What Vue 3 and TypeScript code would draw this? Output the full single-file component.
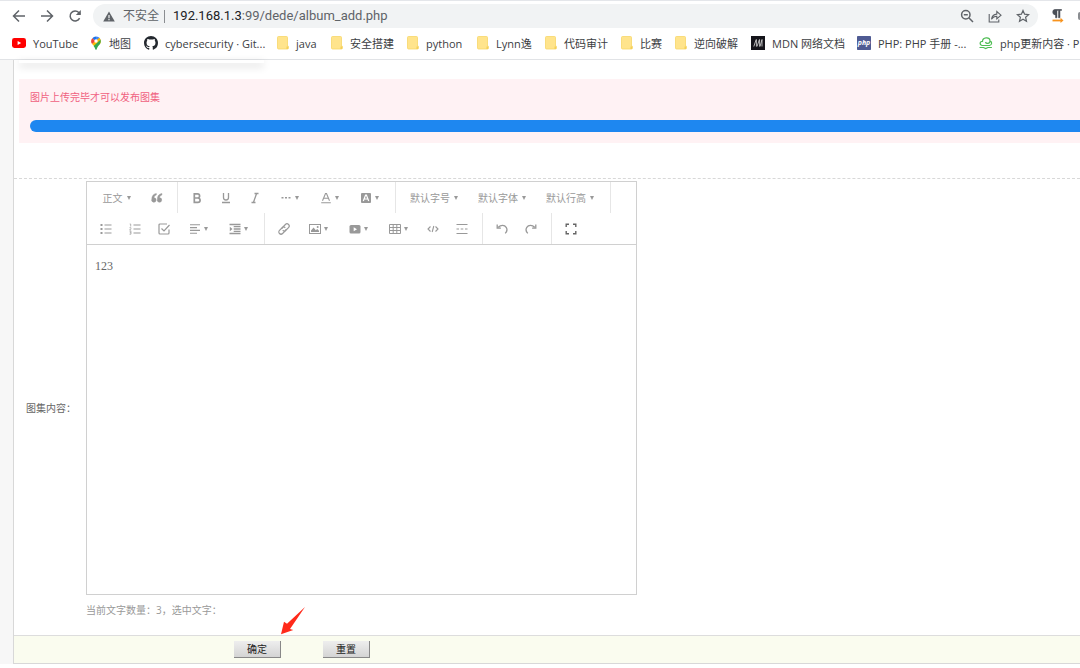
<script setup lang="ts">
import { computed, ref } from 'vue'

interface Bookmark {
  label: string
  icon: string
  width: number
}

interface Tool {
  name: string
  icon?: string
  text?: string
  menu?: boolean
}

const bookmarkIcons: Record<string, string> = {
  youtube:
    '<rect x="0" y="2" width="14" height="10" rx="2.4" fill="#f00"/><path d="M5.6 4.9v4.2L9.2 7z" fill="#fff"/>',
  map:
    '<path d="M6 .5A4.8 4.8 0 0 0 2.300 2.200L6 5.300z" fill="#1a73e8"/><path d="M2.300 2.200A4.800 4.800 0 0 0 2.100 8L6 5.300z" fill="#ea4335"/><path d="M6 .500A4.800 4.800 0 0 1 10.500 3.700L6 5.300z" fill="#4285f4"/><path d="M2.100 8L9.300 1.800C11.300 3.600 11.300 6.300 9.900 8.300L4.300 10.300z" fill="#fbbc04"/><path d="M10.500 3.700C11.300 6.300 9.800 8 8.700 9.400C7.500 10.900 7 12 6.700 13.200q-.7 1-1.400 0C4.900 12 4.500 11 3.600 9.900z" fill="#34a853"/><circle cx="6" cy="5" r="1.700" fill="#fff"/>',
  github:
    '<path transform="scale(.875)" fill="#24292f" d="M8 0C3.580 0 0 3.580 0 8c0 3.540 2.290 6.530 5.470 7.590.4.070.550-.170.550-.380 0-.190-.010-.820-.010-1.490-2.010.370-2.530-.490-2.690-.940-.090-.230-.480-.940-.820-1.130-.280-.150-.680-.520-.010-.530.630-.010 1.080.580 1.230.820.720 1.210 1.870.870 2.330.660.070-.520.280-.870.510-1.070-1.780-.2-3.640-.890-3.640-3.950 0-.870.310-1.590.820-2.150-.080-.2-.360-1.020.080-2.120 0 0 .670-.210 2.200.820.640-.180 1.320-.270 2-.270s1.360.090 2 .270c1.530-1.040 2.200-.820 2.200-.820.440 1.100.160 1.920.080 2.120.510.560.820 1.270.820 2.150 0 3.070-1.870 3.750-3.650 3.950.290.250.540.730.540 1.480 0 1.070-.010 1.930-.010 2.200 0 .210.150.460.550.380A8.010 8.010 0 0 0 16 8c0-4.420-3.580-8-8-8z"/>',
  folder:
    '<path d="M.5 1.500q0-1 1-1h8q1 0 1 1v8.700h.8v2.300q0 .5-.8.500h-9q-1 0-1-1z" fill="#ffe48c" stroke="#f8d768" stroke-width=".8"/><path d="M9.500 13v-2.600h1.800V12q0 1-1 1z" fill="#f5cf57"/>',
  mdn:
    '<rect width="14" height="14" fill="#15141a"/><path d="M2.800 10.500L5.200 3.500M5.400 3.500v7M6 10.500L8.400 3.500M8.600 3.500v7M9 10.500L11 3.500v7" stroke="#ddd" stroke-width=".8" fill="none"/>',
  php:
    '<rect width="14" height="14" rx=".8" fill="#4f5b93"/><text x="7" y="9" text-anchor="middle" font-family="Open Sans, sans-serif" font-size="7" font-style="italic" font-weight="700" fill="#fff">php</text>',
  cloud:
    '<path d="M3 9.500C0 8.500 1 5 3.500 5.500C3.500 1 10.500.500 11 4.500C11.500 8 7 8 6.500 6M11 5C13.500 5.500 13 9 10.500 9.500H3M.5 11.500h4l2.200 1 2.200-1h4" stroke="#4fbd54" stroke-width="1.200" fill="none"/>',
}

const bookmarks: Bookmark[] = [
  { label: 'YouTube', icon: 'youtube', width: 42 },
  { label: '地图', icon: 'map', width: 20 },
  { label: 'cybersecurity · Git...', icon: 'github', width: 97 },
  { label: 'java', icon: 'folder', width: 20 },
  { label: '安全搭建', icon: 'folder', width: 42 },
  { label: 'python', icon: 'folder', width: 36 },
  { label: 'Lynn逸', icon: 'folder', width: 34 },
  { label: '代码审计', icon: 'folder', width: 42 },
  { label: '比赛', icon: 'folder', width: 20 },
  { label: '逆向破解', icon: 'folder', width: 42 },
  { label: 'MDN 网络文档', icon: 'mdn', width: 70 },
  { label: 'PHP: PHP 手册 -...', icon: 'php', width: 86 },
  { label: 'php更新内容 · PH', icon: 'cloud', width: 90 },
]

const toolIcons: Record<string, string> = {
  quote:
    '<path d="M5.300 1.500C2.300 2 .8 4 .8 7.300A2.200 2.200 0 1 0 3 5.800C3 4.300 3.800 3.300 5.300 2.900zM10.900 1.500C7.900 2 6.400 4 6.400 7.300A2.200 2.200 0 1 0 8.600 5.800C8.600 4.300 9.400 3.300 10.900 2.900z" fill="currentColor" stroke="currentColor" stroke-width=".5"/>',
  bold:
    '<path d="M3.300 1.800h3.200a2 2 0 0 1 0 4.200H3.300zM3.300 6h3.600a2.200 2.200 0 0 1 0 4.400H3.300z" stroke="currentColor" stroke-width="1.700" fill="none"/>',
  underline:
    '<path d="M3.500 1v4.500a2.500 2.500 0 0 0 5 0V1M2 10.500h8" stroke="currentColor" stroke-width="1.300" fill="none"/>',
  italic: '<path d="M5.500 1.500h4M2.500 10.500h4M7.600 1.500L4.400 10.500" stroke="currentColor" stroke-width="1.300" fill="none"/>',
  more: '<path d="M1.500 5h2v1.500h-2zM5 5h2v1.500H5zM8.500 5h2v1.500h-2z" fill="currentColor"/>',
  color: '<path d="M2.500 8.800L5.500 1.500h1L9.500 8.800M3.700 6.300h4.600M1.200 10.800h9.600" stroke="currentColor" stroke-width="1.100" fill="none"/>',
  background:
    '<rect x="1" y="1" width="10" height="10" rx="1" fill="currentColor"/><path d="M3.300 9L5.600 3h.8L8.700 9M4.300 7h3.400" stroke="#fff" stroke-width="1.200" fill="none"/>',
  bullets:
    '<path d="M.5 1h2v2h-2zM.5 5h2v2h-2zM.5 9h2v2h-2z" fill="currentColor"/><path d="M4.500 2h7M4.500 6h7M4.500 10h7" stroke="currentColor" stroke-width="1.200"/>',
  numbers:
    '<path d="M4.500 2h7M4.500 6h7M4.500 10h7" stroke="currentColor" stroke-width="1.200"/><path d="M.7 1h1v2.500M.5 4.700h1.400v1L.6 7h1.600M.5 8.200h1.500v3H.5M.8 9.700h1.200" stroke="currentColor" stroke-width=".7" fill="none"/>',
  todo:
    '<path d="M9 1H2Q1 1 1 2v8q0 1 1 1h8q1 0 1-1V6.500M3.500 5.500L6 8l5.500-6" stroke="currentColor" stroke-width="1.200" fill="none"/>',
  align: '<path d="M1 1.800h10M1 4.600h7M1 7.400h10M1 10.200h7" stroke="currentColor" stroke-width="1.100"/>',
  indent:
    '<path d="M.5 1.500h11M4.700 3.700h6.800M4.700 6h6.800M4.700 8.300h6.800M.5 10.500h11" stroke="currentColor" stroke-width="1.300"/><path d="M.8 3.800v4.400L3.500 6z" fill="currentColor"/>',
  link:
    '<g transform="rotate(-45 6 6)" stroke="currentColor" stroke-width="1.200" fill="none"><path d="M7.300 7.500A2 2 0 0 1 5.600 8.200H1.800a2.200 2.200 0 0 1 0-4.400h3.800A2.200 2.200 0 0 1 7.800 6"/><path d="M4.700 4.500A2 2 0 0 1 6.400 3.800h3.800a2.200 2.200 0 0 1 0 4.400H6.400A2.200 2.200 0 0 1 4.200 6"/></g>',
  image:
    '<rect x=".5" y="1.500" width="11" height="9" stroke="currentColor" fill="none"/><path d="M2 9V7.500L4.600 4.500l2.200 2.700L8.200 6 10 7.700V9z" fill="currentColor"/><circle cx="8.700" cy="4" r="1" fill="currentColor"/>',
  video:
    '<rect x=".5" y="2" width="11" height="8.500" rx="1.500" fill="currentColor"/><path d="M4.700 4.300v4L8 6.300z" fill="#fff"/>',
  table:
    '<path d="M.5 1.500h11v9H.5zM.5 4.500h11M.5 7.500h11M4.200 1.500v9M7.800 1.500v9" stroke="currentColor" fill="none"/>',
  code: '<path d="M3.500 3.500L1 6l2.500 2.500M8.500 3.500L11 6 8.500 8.500M6.800 3L5.200 9" stroke="currentColor" stroke-width="1.100" fill="none"/>',
  divider:
    '<path d="M.5 1.500h11M.5 10.500h11M.5 6H3M4.700 6h2.600M9 6h2.500" stroke="currentColor" stroke-width="1.200"/>',
  undo: '<path d="M2.300 4.300C5 1.700 8.600 2 10.200 4.400c1.200 2 .8 4.300-1 6M1.200 1.500v3.600h3.700" stroke="currentColor" stroke-width="1.300" fill="none"/>',
  redo: '<path d="M9.700 4.300C7 1.700 3.400 2 1.800 4.400c-1.200 2-.8 4.300 1 6M10.800 1.500v3.600H7.100" stroke="currentColor" stroke-width="1.300" fill="none"/>',
  fullscreen:
    '<path d="M1.200 4V1.200H4M8 1.200h2.800V4M10.800 8v2.800H8M4 10.800H1.200V8" stroke="#666" stroke-width="1.400" fill="none"/>',
}

const toolbarRows: Tool[][][] = [
  [
    [{ name: '标题', text: '正文', menu: true }, { name: '引用', icon: 'quote' }],
    [
      { name: '粗体', icon: 'bold' },
      { name: '下划线', icon: 'underline' },
      { name: '斜体', icon: 'italic' },
      { name: '更多', icon: 'more', menu: true },
      { name: '文字颜色', icon: 'color', menu: true },
      { name: '背景色', icon: 'background', menu: true },
    ],
    [
      { name: '字号', text: '默认字号', menu: true },
      { name: '字体', text: '默认字体', menu: true },
      { name: '行高', text: '默认行高', menu: true },
    ],
  ],
  [
    [
      { name: '无序列表', icon: 'bullets' },
      { name: '有序列表', icon: 'numbers' },
      { name: '待办', icon: 'todo' },
      { name: '对齐', icon: 'align', menu: true },
      { name: '缩进', icon: 'indent', menu: true },
    ],
    [
      { name: '链接', icon: 'link' },
      { name: '图片', icon: 'image', menu: true },
      { name: '视频', icon: 'video', menu: true },
      { name: '表格', icon: 'table', menu: true },
      { name: '代码块', icon: 'code' },
      { name: '分割线', icon: 'divider' },
    ],
    [{ name: '撤销', icon: 'undo' }, { name: '重做', icon: 'redo' }],
    [{ name: '全屏', icon: 'fullscreen' }],
  ],
]

const address = ref('192.168.1.3:99/dede/album_add.php')
const host = computed(() => address.value.split(':')[0])
const path = computed(() => address.value.slice(host.value.length))
const content = ref('123')
const count = computed(() => content.value.length)
</script>

<template>
  <div class="window">
    <header class="browser">
      <div class="navigation">
        <button class="nav-button" aria-label="后退">
          <svg viewBox="0 0 14 14"><path d="M13 7H2M7 1.500L1.500 7 7 12.500" /></svg>
        </button>
        <button class="nav-button" aria-label="前进">
          <svg viewBox="0 0 14 14"><path d="M1 7h11M7 1.500L12.500 7 7 12.500" /></svg>
        </button>
        <button class="nav-button" aria-label="刷新">
          <svg viewBox="0 0 14 14">
            <path d="M11.600 9.200A5 5 0 1 1 10.800 3.500L12 4.800" />
            <path class="solid" d="M12.800 1v5H7.800z" />
          </svg>
        </button>
        <div class="address">
          <svg class="warning" viewBox="0 0 12 11">
            <path d="M6 .5L11.800 10.500H.2z" fill="#5f6368" />
            <path d="M6 4v3.200M6 8v1.300" stroke="#f1f3f4" stroke-width="1.200" />
          </svg>
          <span class="insecure">不安全</span>
          <span class="bar"></span>
          <a class="url" href="#"><b>{{ host }}</b>{{ path }}</a>
          <button class="address-button" aria-label="缩放">
            <svg viewBox="0 0 14 14"><circle cx="5.800" cy="5.800" r="4.200" /><path d="M9 9l4 4M3.800 5.800h4" /></svg>
          </button>
          <button class="address-button" aria-label="分享">
            <svg viewBox="0 0 14 14">
              <path class="thin" d="M1.200 5v8h9.600v-2.500M3.500 10.300C4 7 6 5.300 8.800 5.100V2.500L13 6.200 8.800 9.800V7.300C6.500 7.300 4.800 8.200 3.500 10.300z" />
            </svg>
          </button>
          <button class="address-button" aria-label="收藏">
            <svg viewBox="0 0 14 14">
              <path class="star" d="M7 1.500l1.600 3.700 4 .4-3 2.700.9 4L7 10.200l-3.500 2.100.9-4-3-2.700 4-.4z" />
            </svg>
          </button>
        </div>
        <button class="extension" aria-label="段落扩展">
          <svg viewBox="0 0 14 14">
            <path d="M4.500 8.800H6V1.500h1.500V8.800H9V1.500h1.500V.3H4.500a2.700 2.700 0 0 0 0 5.600z" fill="#4a4f57" stroke="#4a4f57" stroke-width=".5" />
            <path d="M1.500 11.500h8.500" stroke="#f7931e" stroke-width="1.800" />
            <path d="M9.500 8.800v5.200l3-2.600z" fill="#f7931e" />
          </svg>
        </button>
        <button class="profile" aria-label="更多扩展"></button>
      </div>
      <nav class="bookmarks">
        <a v-for="mark in bookmarks" :key="mark.label" class="bookmark" href="#">
          <svg
            :class="['bookmark-icon', mark.icon]"
            :viewBox="mark.icon === 'folder' || mark.icon === 'map' ? '0 0 12 14' : '0 0 14 14'"
            v-html="bookmarkIcons[mark.icon]"
          ></svg>
          <span class="bookmark-label" :style="{ width: mark.width + 'px' }">{{ mark.label }}</span>
        </a>
      </nav>
    </header>

    <div class="page">
      <main class="content">
        <div class="card"></div>
        <section class="notice">
          <p class="notice-text">图片上传完毕才可以发布图集</p>
          <div class="progress" role="progressbar" aria-label="上传进度" aria-valuenow="100"></div>
        </section>

        <form class="form" @submit.prevent>
          <div class="field">
            <label class="field-label" for="body">图集内容：</label>
            <div class="field-body">
              <div class="editor">
                <div class="toolbar" role="toolbar">
                  <div v-for="(row, r) in toolbarRows" :key="r" class="toolbar-row">
                    <div v-for="(group, g) in row" :key="g" class="group">
                      <button
                        v-for="tool in group"
                        :key="tool.name"
                        type="button"
                        :aria-label="tool.name"
                        :class="['tool', { menu: tool.menu, wide: tool.text, short: tool.text === '正文' }]"
                      >
                        <span v-if="tool.text">{{ tool.text }}</span>
                        <svg v-else class="tool-icon" viewBox="0 0 12 12" v-html="toolIcons[tool.icon!]"></svg>
                        <i v-if="tool.menu" class="caret"></i>
                      </button>
                    </div>
                  </div>
                </div>
                <textarea id="body" v-model="content" class="body" spellcheck="false"></textarea>
              </div>
              <p class="counter">当前文字数量：{{ count }}，选中文字：</p>
            </div>
          </div>
          <div class="actions">
            <button type="submit" class="action">确定</button>
            <button type="reset" class="action">重置</button>
            <svg class="pointer" viewBox="0 0 24 28">
              <path d="M0 27.300L3 14.700 6 16.700 24 0 9 22 12.300 23z" fill="#ff2a1a" />
            </svg>
          </div>
        </form>
      </main>
    </div>
  </div>
</template>

<style>
body {
  margin: 0;
  background: #fff;
}
</style>

<style scoped>
.window {
  overflow: hidden;
  font-family: "Open Sans", "Noto Sans CJK SC", sans-serif;
}

button {
  padding: 0;
  border: 0;
  background: none;
  font-family: inherit;
}

a {
  color: inherit;
  text-decoration: none;
}

p {
  margin: 0;
}

.browser {
  border-top: 1px solid #e4e6ea;
  border-bottom: 1px solid #e1e3e6;
  background: #fff;
}

.navigation {
  display: flex;
  align-items: center;
  height: 24px;
  padding: 3px 0 1px 12px;
}

.nav-button {
  flex: none;
  width: 14px;
  height: 14px;
  margin-right: 14px;
}

.nav-button svg,
.address-button svg {
  display: block;
  width: 14px;
  height: 14px;
  fill: none;
  stroke: #5f6368;
  stroke-width: 1.5;
}

.nav-button .solid {
  fill: #5f6368;
  stroke: none;
}

.address-button .thin {
  stroke-width: 1.1;
}

.address-button .star {
  stroke-width: 1.2;
}

.address {
  display: flex;
  flex: 1;
  align-items: center;
  height: 24px;
  margin-left: -3px;
  padding: 0 8px 0 10px;
  border-radius: 12px;
  background: #f1f3f4;
  color: #5f6368;
  font-size: 12px;
  line-height: 24px;
}

.warning {
  width: 12px;
  height: 11px;
  margin-right: 8px;
}

.bar {
  width: 1px;
  height: 13px;
  margin: 0 8px 0 5px;
  background: #8a8d91;
}

.url {
  flex: 1;
  font-family: Roboto, "Open Sans", sans-serif;
  font-size: 13px;
}

.url b {
  color: #202124;
  font-weight: 400;
}

.address-button {
  width: 14px;
  height: 14px;
  margin-left: 14px;
}

.extension {
  width: 14px;
  height: 14px;
  margin: 0 13px;
}

.extension svg {
  display: block;
  width: 14px;
  height: 14px;
}

.profile {
  width: 2px;
  height: 8px;
  border-radius: 4px 0 0 4px;
  background: #8a8d91;
}

.bookmarks {
  display: flex;
  gap: 15px;
  height: 28px;
  padding: 0 0 2px 12px;
}

.bookmark {
  display: flex;
  flex: none;
  align-items: center;
  gap: 7px;
  color: #3c4043;
  font-size: 11px;
  white-space: nowrap;
}

.bookmark-icon {
  width: 14px;
  height: 14px;
}

.bookmark-icon.folder,
.bookmark-icon.map {
  width: 12px;
}

.page {
  padding-left: 13px;
  background: #f7f7f7;
}

.content {
  border-left: 1px solid #d8d8d8;
  background: #fff;
}

.card {
  width: 245px;
  height: 3px;
  margin-left: 5px;
  background: #fff;
  box-shadow: 0 3px 9px rgba(0, 0, 0, 0.2);
}

.notice {
  height: 64px;
  margin: 16px 0 35px 5px;
  padding-left: 11px;
  background: #fff2f4;
}

.notice-text {
  padding: 10px 0 14px;
  color: #f0617f;
  font-size: 10px;
  line-height: 17px;
}

.progress {
  height: 12px;
  border-radius: 6px 0 0 6px;
  background: #1e87f0;
}

.field {
  display: grid;
  grid-template-columns: 72px 1fr;
  align-items: center;
  border-top: 1px dashed #d8d8d8;
}

.field-label {
  padding-left: 12px;
  color: #666;
  font-size: 10px;
}

.field-body {
  padding: 2px 0 16px;
}

.editor {
  width: 549px;
  border: 1px solid #d0d0d0;
}

.toolbar {
  border-bottom: 1px solid #d0d0d0;
}

.toolbar-row {
  display: flex;
  height: 31px;
}

.group {
  display: flex;
  padding: 0 6px 0 4px;
  border-right: 1px solid #e6e6e6;
}

.toolbar-row:last-child .group:last-child {
  border-right: 0;
}

.tool {
  display: flex;
  align-items: center;
  justify-content: center;
  width: 29px;
  color: #999;
  font-size: 10px;
}

.tool.menu {
  gap: 3px;
  width: 40px;
}

.tool.wide {
  gap: 4px;
  width: 68px;
}

.tool.short {
  width: 51px;
}

.tool-icon {
  width: 12px;
  height: 12px;
}

.caret {
  border: 2px solid transparent;
  border-top: 4px solid #999;
  border-bottom: 0;
}

.body {
  display: block;
  box-sizing: border-box;
  width: 100%;
  height: 349px;
  padding: 13px 8px;
  border: 0;
  outline: 0;
  resize: none;
  color: #666;
  font-family: "Liberation Serif", "Noto Sans CJK SC", serif;
  font-size: 12px;
  line-height: 16px;
}

.counter {
  padding-top: 7px;
  color: #999;
  font-size: 10px;
  line-height: 17px;
}

.actions {
  position: relative;
  display: flex;
  gap: 42px;
  align-items: center;
  height: 27px;
  padding-left: 220px;
  border-top: 1px solid #ddd;
  border-bottom: 1px solid #d8d8d8;
  background: #fafcef;
}

.action {
  width: 47px;
  height: 17px;
  border-right: 1px solid #888;
  border-bottom: 1px solid #888;
  background: linear-gradient(#eee, #d4d4d4);
  color: #222;
  font-size: 10px;
  line-height: 16px;
}

.pointer {
  position: absolute;
  top: -29px;
  left: 267px;
  width: 24px;
  height: 28px;
}
</style>
